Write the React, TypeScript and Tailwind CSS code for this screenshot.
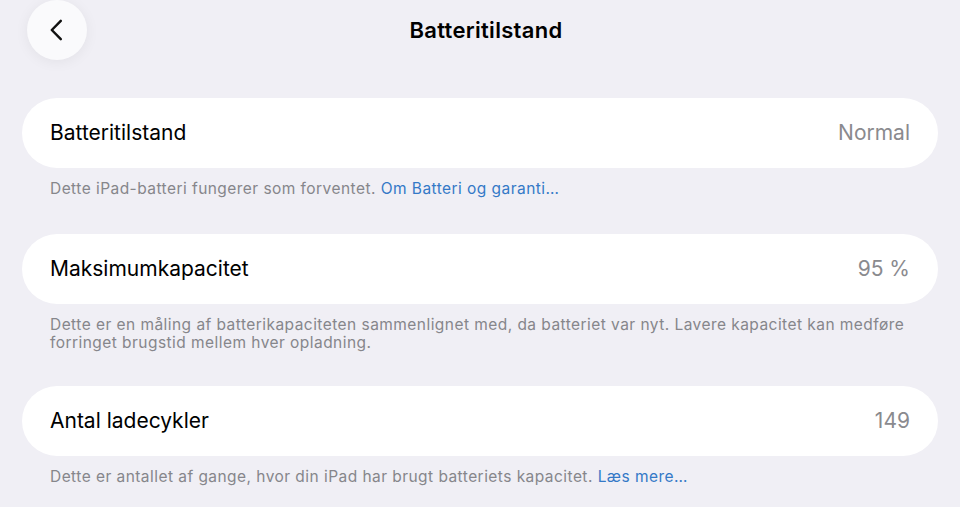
import React from "react";

type Row = {
  label: string;
  value: string;
  note: string;
  link?: string;
};

const rows: Row[] = [
  {
    label: "Batteritilstand",
    value: "Normal",
    note: "Dette iPad-batteri fungerer som forventet.",
    link: "Om Batteri og garanti…",
  },
  {
    label: "Maksimumkapacitet",
    value: "95 %",
    note: "Dette er en måling af batterikapaciteten sammenlignet med, da batteriet var nyt. Lavere kapacitet kan medføre forringet brugstid mellem hver opladning.",
  },
  {
    label: "Antal ladecykler",
    value: "149",
    note: "Dette er antallet af gange, hvor din iPad har brugt batteriets kapacitet.",
    link: "Læs mere…",
  },
];

const BackButton = () => (
  <button className="flex h-[60px] w-[60px] items-center justify-center rounded-full bg-[#fafafc] shadow-[0_2px_14px_rgba(0,0,0,0.06)]">
    <svg width="26" height="26" viewBox="0 0 24 24" fill="none">
      <path
        d="M15.5 3.5 L7.2 12 L15.5 20.5"
        stroke="#111"
        strokeWidth="2.3"
        strokeLinecap="round"
        strokeLinejoin="round"
      />
    </svg>
  </button>
);

const App: React.FC = () => {
  return (
    <div
      className="h-[507px] w-[960px] overflow-hidden bg-[#f0eff5] text-black"
      style={{ fontFamily: "Inter, 'Liberation Sans', sans-serif" }}
    >
      {/* Navigation bar */}
      <div className="relative flex h-[60px] items-center justify-center">
        <div className="absolute left-[27px] top-0">
          <BackButton />
        </div>
        <h1 className="pl-[12px] text-[22px] font-semibold tracking-[0.3px]">
          Batteritilstand
        </h1>
      </div>

      <div className="px-[22px]">
        {rows.map((row, i) => (
          <div key={row.label} className={i === 0 ? "mt-[38px]" : i === 1 ? "mt-[36px]" : "mt-[34px]"}>
            <div className="flex h-[70px] items-center justify-between rounded-full bg-white px-[28px]">
              <span className="text-[21px]">{row.label}</span>
              <span className="text-[21px] text-[#8a8a8e]">{row.value}</span>
            </div>
            <p className="mt-[12px] px-[28px] text-[15.5px] leading-[18px] tracking-[0.45px] text-[#86868b]">
              {row.note}
              {row.link && <span className="text-[#3479c7]"> {row.link}</span>}
            </p>
          </div>
        ))}
      </div>
    </div>
  );
};

export default App;
